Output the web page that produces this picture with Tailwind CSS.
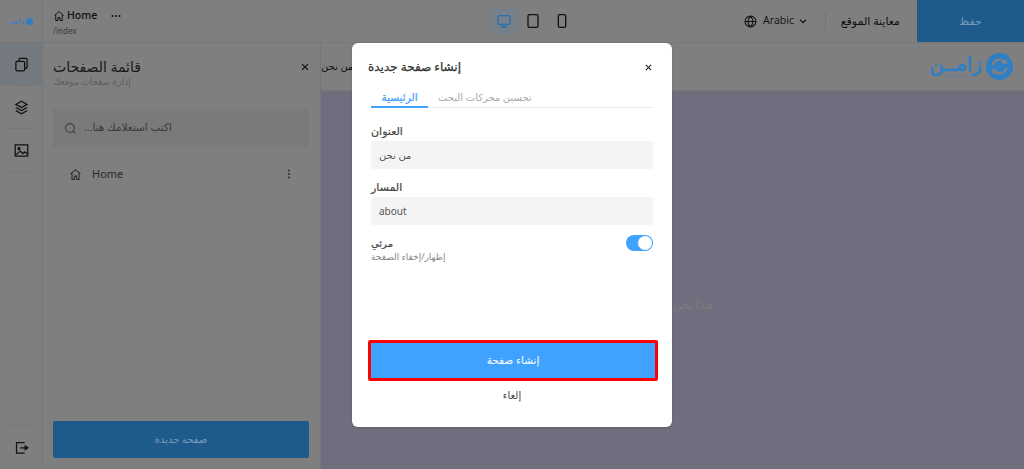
<!DOCTYPE html>
<html lang="ar">
  <head>
    <meta charset="UTF-8" />
    <title>Zamn</title>
    <script src="https://cdn.jsdelivr.net/npm/@tailwindcss/browser@4"></script>
  </head>
  <body class="relative w-[1024px] h-[469px] overflow-hidden bg-white font-['Noto_Sans','DejaVu_Sans',sans-serif] text-[#222]">
    <!-- top bar -->
    <header class="flex items-stretch h-[43px] border-b border-[#eee]">
      <div class="relative z-10 flex shrink-0 items-center justify-center w-[43px] border-r border-[#777]">
        <div class="flex items-center gap-[2px] text-[#2f7fc4]">
          <span class="text-[6px] leading-none font-bold">زامن</span>
          <span class="w-[7px] h-[7px] rounded-full bg-[#2f7fc4]"></span>
        </div>
      </div>
      <div class="w-[277px] shrink-0 pl-[10px] pt-[8px]">
        <div class="flex items-center gap-[2px] h-[15px]">
          <svg class="w-[12px] h-[12px]" viewBox="0 0 24 24" fill="none" stroke="currentColor" stroke-width="2"><path d="M3 11 12 3l9 8M5.500 9.500V21h4.500v-6h4v6h4.500V9.500"/></svg>
          <span class="text-[10.500px] font-medium leading-none">Home</span>
          <svg class="ml-[11px] w-[12px] h-[12px]" viewBox="0 0 24 24" fill="currentColor"><circle cx="5" cy="12" r="2"/><circle cx="12" cy="12" r="2"/><circle cx="19" cy="12" r="2"/></svg>
        </div>
        <div class="text-[8px] leading-[10px] mt-[3px] text-[#777]">/index</div>
      </div>
      <div class="flex shrink-0 items-center gap-[3px] ml-[171px] h-[42px]">
        <div class="relative z-10 flex items-center justify-center w-[26px] h-[26px] rounded-[2px] bg-[#75808a] text-[#2a70aa]">
          <svg class="w-[16px] h-[16px]" viewBox="0 0 24 24" fill="none" stroke="currentColor" stroke-width="2"><rect x="3" y="4" width="18" height="13" rx="1.500"/><path d="M12 17v4M7 21h10"/></svg>
        </div>
        <div class="flex items-center justify-center w-[26px] h-[26px]">
          <svg class="w-[16px] h-[16px]" viewBox="0 0 24 24" fill="none" stroke="currentColor" stroke-width="2"><rect x="4.500" y="2.500" width="15" height="19" rx="2"/><path d="M12 18h.01"/></svg>
        </div>
        <div class="flex items-center justify-center w-[26px] h-[26px]">
          <svg class="w-[16px] h-[16px]" viewBox="0 0 24 24" fill="none" stroke="currentColor" stroke-width="2"><rect x="6.500" y="2.500" width="11" height="19" rx="2"/><path d="M12 18h.01"/></svg>
        </div>
      </div>
      <div class="flex items-center ml-auto mr-[17px] h-[42px]">
        <svg class="w-[13px] h-[13px]" viewBox="0 0 24 24" fill="none" stroke="currentColor" stroke-width="2"><circle cx="12" cy="12" r="10"/><path d="M2 12h20M12 2c-6 6-6 14 0 20M12 2c6 6 6 14 0 20"/></svg>
        <span class="ml-[6px] text-[10.500px] text-[#333]">Arabic</span>
        <svg class="ml-[4px] w-[10px] h-[10px]" viewBox="0 0 24 24" fill="none" stroke="currentColor" stroke-width="3"><path d="m5 9 7 7 7-7"/></svg>
        <span class="ml-[17px] w-px h-[20px] bg-[#e5e5e5]"></span>
        <span class="ml-[16px] w-[58px] text-center text-[11px] font-medium whitespace-nowrap" dir="rtl">معاينة الموقع</span>
      </div>
      <button class="relative z-10 shrink-0 w-[107px] h-[42px] bg-[#1f5a8c] text-white/40 text-[11px]">حفظ</button>
    </header>

    <div class="flex h-[426px]">
      <!-- icon rail -->
      <nav class="flex shrink-0 flex-col w-[43px] border-r border-[#eee]">
        <div class="flex items-center justify-center h-[42px] bg-[#e6f2ff]">
          <svg class="w-[15px] h-[15px]" viewBox="0 0 24 24" fill="none" stroke="currentColor" stroke-width="2"><rect x="3" y="7" width="14" height="15" rx="2"/><path d="M8 7V4a2 2 0 0 1 2-2h9a2 2 0 0 1 2 2v12a2 2 0 0 1-2 2h-2"/></svg>
        </div>
        <div class="flex items-center justify-center h-[43px] mx-[10px] border-t border-[#eee]">
          <svg class="w-[15px] h-[15px]" viewBox="0 0 24 24" fill="none" stroke="currentColor" stroke-width="2"><path d="m12 2 9 5-9 5-9-5zM3 12l9 5 9-5M3 17l9 5 9-5"/></svg>
        </div>
        <div class="flex items-center justify-center h-[44px] mx-[10px] border-y border-[#eee]">
          <svg class="w-[15px] h-[15px]" viewBox="0 0 24 24" fill="none" stroke="currentColor" stroke-width="2"><rect x="2" y="3" width="20" height="18"/><circle cx="8" cy="9" r="1.500" fill="currentColor"/><path d="m3 19 7-6 4 4 3-3 5 4"/></svg>
        </div>
        <div class="flex-1"></div>
        <div class="flex items-center justify-center h-[44px] mx-[10px] border-t border-[#eee]">
          <svg class="w-[15px] h-[15px]" viewBox="0 0 24 24" fill="none" stroke="currentColor" stroke-width="2"><path d="M17 4H4v17h13M17 8v0M17 17v0M10 12.500h11"/><path d="m18 9.500 4 3-4 3z" fill="currentColor"/></svg>
        </div>
      </nav>

      <!-- pages panel -->
      <aside class="flex shrink-0 flex-col w-[277px] pl-[10px] pr-[11px] pb-[11px]">
        <div class="flex items-start justify-between pt-[16px]">
          <div class="flex flex-col items-start">
            <span class="text-[14px] leading-[16px] text-[#333]" dir="rtl">قائمة الصفحات</span>
            <span class="text-[9px] leading-[13px] text-[#bbb]" dir="rtl">إدارة صفحات موقعك</span>
          </div>
          <svg class="mt-[3px] mr-[-1px] w-[10px] h-[10px]" viewBox="0 0 24 24" fill="none" stroke="currentColor" stroke-width="3"><path d="M5 5l14 14M19 5 5 19"/></svg>
        </div>
        <div class="flex items-center h-[38px] mt-[21px] pl-[11px] rounded-[2px] bg-[#f4f4f4] text-[#777]">
          <svg class="w-[13px] h-[13px]" viewBox="0 0 24 24" fill="none" stroke="currentColor" stroke-width="2"><circle cx="11" cy="11" r="8"/><path d="m21 21-4-4"/></svg>
          <span class="ml-[7px] text-[10.500px]" dir="rtl">اكتب استعلامك هنا...</span>
        </div>
        <div class="flex items-center justify-between h-[18px] mt-[18px] pl-[16px] pr-[14px] text-[#555]">
          <div class="flex items-center gap-[10px]">
            <svg class="w-[13px] h-[13px]" viewBox="0 0 24 24" fill="none" stroke="currentColor" stroke-width="2"><path d="M3 11 12 3l9 8M5.500 9.500V21h4.500v-6h4v6h4.500V9.500"/></svg>
            <span class="text-[11px]">Home</span>
          </div>
          <svg class="w-[12px] h-[12px]" viewBox="0 0 24 24" fill="currentColor"><circle cx="12" cy="5" r="2"/><circle cx="12" cy="12" r="2"/><circle cx="12" cy="19" r="2"/></svg>
        </div>
        <div class="flex-1"></div>
        <button class="relative z-10 h-[37px] rounded-[2px] bg-[#1f5a8c] text-white/40 text-[10px]">صفحة جديدة</button>
      </aside>

      <!-- page canvas -->
      <main class="flex flex-col flex-1 border-l border-[#eee]">
        <div class="flex items-center justify-between h-[48px] pr-[11px] border-b border-[#eee]">
          <span class="text-[10px] font-medium" dir="rtl">من نحن</span>
          <div class="relative z-10 flex items-center gap-[4px] text-[#2f7fc4]">
            <div class="flex flex-col items-center">
              <span class="text-[20px] leading-[18px] [-webkit-text-stroke:0.7px_#2f7fc4]" dir="rtl">زامــن</span>
              <span class="text-[4px] leading-[5px] tracking-[1px]">Zamn.sa</span>
            </div>
            <svg class="w-[27px] h-[27px]" viewBox="0 0 24 24">
              <circle cx="12" cy="12" r="12" fill="currentColor"/>
              <path d="M6 11a6 6 0 0 1 10.500-3M18 13a6 6 0 0 1-10.500 3" fill="none" stroke="#808080" stroke-width="2"/>
              <path d="m18 5 .5 5-5-1zM6 19l-.5-5 5 1z" fill="#808080"/>
            </svg>
          </div>
        </div>
        <div class="flex flex-1 items-center justify-center pt-[50px] bg-[#dedcfc] text-[#f6f6f8] text-[13px]">
          <span dir="rtl">هذا نص تجريبي</span>
        </div>
      </main>
    </div>

    <!-- modal backdrop -->
    <div class="absolute inset-0 bg-black/50"></div>

    <!-- new page dialog -->
    <div class="absolute z-20 left-[352px] top-[43px] flex flex-col w-[320px] h-[384px] rounded-[6px] bg-white px-[19px] shadow-sm">
      <div class="flex items-center justify-between h-[48px]">
        <span class="-ml-[3px] text-[12px] font-medium text-[#333] [-webkit-text-stroke:0.25px_#333]" dir="rtl">إنشاء صفحة جديدة</span>
        <svg class="w-[9px] h-[9px]" viewBox="0 0 24 24" fill="none" stroke="currentColor" stroke-width="3"><path d="M5 5l14 14M19 5 5 19"/></svg>
      </div>
      <div class="flex items-end h-[17px] border-b border-[#eee]">
        <span class="w-[57px] h-[18px] border-b-2 border-[#3fa2ff] text-center text-[10.500px] font-medium leading-[15px] text-[#3fa2ff] [-webkit-text-stroke:0.2px_#3fa2ff] -mb-px">الرئيسية</span>
        <span class="ml-[10px] h-[17px] text-[10px] leading-[15px] text-[#aaa]">تحسين محركات البحث</span>
      </div>
      <span class="mt-[16px] self-start text-[11px] leading-[14px] font-medium text-[#444] [-webkit-text-stroke:0.2px_#444]">العنوان</span>
      <div class="flex items-center h-[28px] mt-[3px] px-[8px] rounded-[2px] bg-[#f4f4f4] text-[10px] text-[#555]">من نحن</div>
      <span class="mt-[11px] self-start text-[11px] leading-[14px] font-medium text-[#444] [-webkit-text-stroke:0.2px_#444]">المسار</span>
      <div class="flex items-center h-[28px] mt-[3px] px-[8px] rounded-[2px] bg-[#f4f4f4] text-[10px] text-[#555]">about</div>
      <div class="flex items-start justify-between mt-[10px]">
        <div class="flex flex-col items-start">
          <span class="text-[10px] leading-[16px] font-medium text-[#444] [-webkit-text-stroke:0.2px_#444]">مرئي</span>
          <span class="text-[9px] leading-[12px] text-[#888]" dir="rtl">إظهار/إخفاء الصفحة</span>
        </div>
        <div class="flex items-center justify-end w-[27px] h-[16px] pr-[1px] rounded-full bg-[#3fa2ff]">
          <span class="w-[14px] h-[14px] rounded-full bg-white"></span>
        </div>
      </div>
      <div class="flex-1"></div>
      <button class="-ml-[3px] -mr-[5px] h-[41px] border-[3px] border-[#f00] rounded-[2px] bg-[#3fa2ff] text-white text-[10.500px] font-medium">إنشاء صفحة</button>
      <button class="h-[28px] mb-[18px] text-[10px] text-[#444]">إلغاء</button>
    </div>
  </body>
</html>
